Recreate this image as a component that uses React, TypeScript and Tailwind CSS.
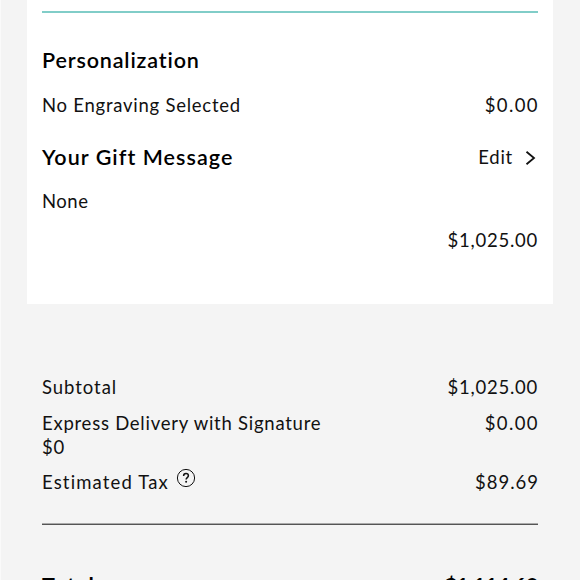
import type { ReactNode } from "react";

type RowProps = {
  label: ReactNode;
  value: ReactNode;
  className?: string;
};

function Row({ label, value, className = "" }: RowProps) {
  return (
    <div className={`flex items-start justify-between leading-6 ${className}`}>
      <span>{label}</span>
      <span className="whitespace-nowrap">{value}</span>
    </div>
  );
}

function HelpIcon() {
  return (
    <svg className="-mt-0.5" width="20" height="20" viewBox="0 0 20 20" fill="none" stroke="#111" aria-label="Help">
      <circle cx="10" cy="10" r="8.6" strokeWidth="1" />
      <path d="M7.6 8C7.6 6.4 8.6 5.6 10 5.6s2.4.9 2.4 2.2c0 1.8-2.3 1.8-2.3 3.7" strokeWidth="1.5" />
      <circle cx="10.1" cy="13.8" r="1" fill="#111" stroke="none" />
    </svg>
  );
}

export default function App() {
  return (
    <div className="h-[580px] w-[580px] overflow-hidden border-l border-[#fafafa] bg-[#f4f4f4] font-[Lato,sans-serif] text-[18.5px] tracking-[0.75px] text-[#111]">
      <section className="ml-[26px] h-[304px] w-[526px] bg-white px-[15px] pt-[11px]">
        <hr className="h-[2px] border-0 bg-[#81cdc8]" />
        <h2 className="mt-[35px] text-[21.5px] font-semibold leading-6 tracking-[0.85px] text-black">Personalization</h2>
        <Row
          className="mt-[21px]"
          label="No Engraving Selected"
          value={<span className="-mr-px tracking-[1.4px]">$0.00</span>}
        />

        <div className="mt-7 flex items-center justify-between leading-6">
          <h2 className="text-[21.5px] font-semibold tracking-[1.05px] text-black">Your Gift Message</h2>
          <button type="button" className="flex items-center gap-3 pr-0.5">
            <span>Edit</span>
            <svg className="mt-0.5" width="11" height="16" viewBox="0 0 11 16" fill="none" stroke="#111" strokeWidth="1.8">
              <path d="M1.5 1.8 9 8 1.5 14.2" />
            </svg>
          </button>
        </div>
        <p className="mt-5 leading-6 tracking-[0.5px]">None</p>
        <p className="mt-[15px] text-right leading-6">$1,025.00</p>
      </section>

      <section className="ml-[41px] w-[496px] pt-[71px]">
        <Row
          label={<span className="tracking-[0.95px]">Subtotal</span>}
          value="$1,025.00"
        />
        <Row
          className="mt-3"
          label={
            <>
              Express Delivery with Signature
              <br />
              $0
            </>
          }
          value={<span className="-mr-px tracking-[1.4px]">$0.00</span>}
        />
        <Row
          className="mt-[11px]"
          label={
            <span className="flex items-start gap-[7px] tracking-[1.15px]">
              Estimated Tax
              <HelpIcon />
            </span>
          }
          value={<span className="-mr-px tracking-[1px]">$89.69</span>}
        />
        <hr className="mt-[29px] h-[2px] border-b border-t border-b-[#555] border-t-[#aaa]" />
        <Row
          className="mt-[48px] text-[21.5px] font-bold text-black"
          label={<span className="tracking-[1.3px]">Total</span>}
          value={<span className="tracking-[-0.4px]">$1,114.69</span>}
        />
      </section>
    </div>
  );
}
